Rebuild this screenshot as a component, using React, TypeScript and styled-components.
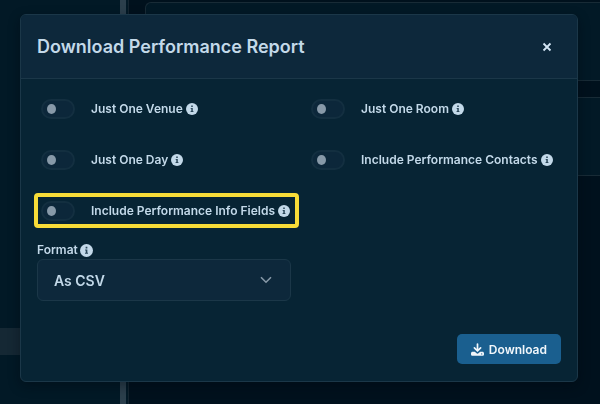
import React, { useId, useState } from "react";
import styled, { createGlobalStyle } from "styled-components";

const color = {
  page: "#00111d",
  sidebar: "#021926",
  panelLine: "#13242f",
  dialog: "#072434",
  header: "#0d283b",
  line: "#1b3748",
  text: "#c3d9e9",
  accent: "#1a5f8f",
  highlight: "#f7dc38",
};

const GlobalStyle = createGlobalStyle`
  *, *::before, *::after { box-sizing: border-box; }
  body {
    margin: 0;
    background: ${color.page};
    color: ${color.text};
    font-family: Inter, "Liberation Sans", sans-serif;
    overflow: hidden;
  }
  button, select, input { font: inherit; color: inherit; }
`;

const Page = styled.div`
  display: flex;
  height: 100vh;
`;

const Sidebar = styled.aside`
  flex: 0 0 120px;
  display: flex;
  flex-direction: column;
  justify-content: flex-end;
  padding-bottom: 49px;
  background: ${color.sidebar};
`;

const SidebarItem = styled.div`
  height: 27px;
  background: #152834;
`;

const ScrollTrack = styled.div`
  flex: 0 0 9px;
  background: ${color.sidebar};
  border-right: 1px solid ${color.panelLine};
`;

const ScrollThumb = styled.div`
  width: 6px;
  height: 100%;
  background: #2b3f4c;
`;

const Content = styled.main`
  flex: 1;
  display: flex;
  flex-direction: column;
  gap: 16px;
  padding: 2px 0 0 16px;
`;

const Card = styled.section`
  height: 79px;
  background: ${color.sidebar};
  border: 1px solid #182b36;
  border-right: 0;
  border-radius: 6px 0 0 6px;
`;

const Overlay = styled.div`
  position: fixed;
  inset: 0;
  padding: 14px 22px 22px 20px;
`;

const Dialog = styled.section`
  display: flex;
  flex-direction: column;
  height: 100%;
  background: ${color.dialog};
  border: 1px solid ${color.line};
  border-radius: 6px;
  box-shadow: 0 4px 12px rgba(0, 8, 16, 0.4);
  overflow: hidden;
`;

const Header = styled.header`
  display: flex;
  align-items: center;
  justify-content: space-between;
  height: 64px;
  padding: 0 16px;
  background: ${color.header};
  border-bottom: 1px solid ${color.line};
`;

const Title = styled.h1`
  margin: 0;
  font-size: 18px;
  line-height: 24px;
  font-weight: 600;
`;

const CloseButton = styled.button`
  display: grid;
  place-items: center;
  width: 28px;
  height: 28px;
  padding: 0;
  border: 0;
  background: none;
  cursor: pointer;
`;

const Body = styled.div`
  flex: 1;
  padding: 12px 16px 0;
`;

const Options = styled.div`
  display: grid;
  grid-template-columns: repeat(2, minmax(0, 1fr));
  gap: 15px 16px;
`;

const Option = styled.div<{ $highlighted?: boolean }>`
  position: relative;
  display: flex;
  align-items: center;
  height: 36px;
  padding-left: 4px;
  white-space: nowrap;

  &::after {
    content: "";
    display: ${(p) => (p.$highlighted ? "block" : "none")};
    position: absolute;
    inset: 0 -8px 1px -3px;
    border: 4px solid ${color.highlight};
    border-radius: 4px;
    pointer-events: none;
  }
`;

const Switch = styled.input`
  appearance: none;
  flex: none;
  display: flex;
  align-items: center;
  width: 34px;
  height: 20px;
  margin: 0 16px 0 0;
  padding: 0 4px;
  background: #0c273a;
  border: 2px solid #132f40;
  border-radius: 10px;
  cursor: pointer;

  &::before {
    content: "";
    width: 9px;
    height: 10px;
    border-radius: 50%;
    background: #8799a8;
  }

  &:checked {
    justify-content: flex-end;
    background: ${color.accent};
  }
`;

const OptionLabel = styled.label`
  margin-right: 3px;
  font-size: 12px;
  line-height: 18px;
  font-weight: 600;
`;

const FieldLabel = styled.div`
  display: flex;
  align-items: center;
  gap: 2px;
  margin-top: 12px;
  font-size: 12px;
  line-height: 18px;
  font-weight: 600;
`;

const InfoSvg = styled.svg`
  display: block;
  flex: none;
`;

const SelectBox = styled.div`
  display: grid;
  align-items: center;
  width: calc(50% - 8px);
`;

const Select = styled.select`
  grid-area: 1 / 1;
  appearance: none;
  width: 100%;
  height: 42px;
  padding: 0 40px 0 16px;
  background: ${color.header};
  border: 1px solid ${color.line};
  border-radius: 6px;
  font-size: 14px;
  font-weight: 600;
`;

const Chevron = styled.svg`
  grid-area: 1 / 1;
  justify-self: end;
  margin-right: 19px;
  pointer-events: none;
`;

const Footer = styled.footer`
  display: flex;
  justify-content: flex-end;
  padding: 0 16px 17px;
`;

const DownloadButton = styled.button`
  display: flex;
  align-items: center;
  justify-content: center;
  gap: 5px;
  height: 30px;
  padding: 0 14px;
  background: ${color.accent};
  border: 0;
  border-radius: 5px;
  color: #f2f7fb;
  font-size: 12px;
  font-weight: 600;
  cursor: pointer;
`;

function InfoIcon({ size = 12 }: { size?: number }) {
  return (
    <InfoSvg width={size} height={size} viewBox="0 0 12 12" aria-hidden="true">
      <circle cx="6" cy="6" r="6" fill="#c3d9e9" />
      <path
        d="M5.2 2.6h1.6v1.5H5.2zM4.7 5h2.1v3h.6v1H4.6V8h.7V6h-.6z"
        fill="#2b4759"
      />
    </InfoSvg>
  );
}

function DownloadIcon() {
  return (
    <svg width="13" height="13" viewBox="0 0 13 13" aria-hidden="true">
      <path
        d="M6.5 1v6.500M3.400 4.900l3.100 3.100 3.100-3.100"
        fill="none"
        stroke="currentColor"
        strokeWidth="1.7"
        strokeLinecap="round"
        strokeLinejoin="round"
      />
      <path
        d="M1.6 8.8h2.2l1.5 1.3a1.8 1.8 0 0 0 2.4 0l1.5-1.3h2.2c.9 0 1.6.7 1.6 1.6v.8c0 .9-.7 1.6-1.6 1.6H1.6C.7 12.8 0 12.1 0 11.2v-.8c0-.9.7-1.6 1.6-1.6z"
        fill="currentColor"
      />
      <circle cx="10.7" cy="10.9" r=".6" fill={color.accent} />
    </svg>
  );
}

function ToggleOption({ label, highlighted }: { label: string; highlighted?: boolean }) {
  const id = useId();
  const [on, setOn] = useState(false);
  return (
    <Option $highlighted={highlighted}>
      <Switch
        id={id}
        type="checkbox"
        role="switch"
        checked={on}
        onChange={(e) => setOn(e.target.checked)}
      />
      <OptionLabel htmlFor={id}>{label}</OptionLabel>
      <InfoIcon />
    </Option>
  );
}

export default function App() {
  return (
    <>
      <GlobalStyle />
      <Page>
        <Sidebar>
          <SidebarItem />
        </Sidebar>
        <ScrollTrack>
          <ScrollThumb />
        </ScrollTrack>
        <Content>
          <Card />
          <Card />
        </Content>
      </Page>
      <Overlay>
        <Dialog role="dialog" aria-modal="true" aria-labelledby="report-title">
          <Header>
            <Title id="report-title">Download Performance Report</Title>
            <CloseButton type="button" aria-label="Close">
              <svg width="10" height="10" viewBox="0 0 10 10" aria-hidden="true">
                <path d="M1.5 1.5l7 7M8.5 1.5l-7 7" stroke="#d3e6f4" strokeWidth="1.8" />
              </svg>
            </CloseButton>
          </Header>
          <Body>
            <Options>
              <ToggleOption label="Just One Venue" />
              <ToggleOption label="Just One Room" />
              <ToggleOption label="Just One Day" />
              <ToggleOption label="Include Performance Contacts" />
              <ToggleOption label="Include Performance Info Fields" highlighted />
            </Options>
            <FieldLabel>
              <label htmlFor="format">Format</label>
              <InfoIcon size={13} />
            </FieldLabel>
            <SelectBox>
              <Select id="format" defaultValue="csv">
                <option value="csv">As CSV</option>
              </Select>
              <Chevron width="12" height="8" viewBox="0 0 12 8" aria-hidden="true">
                <path d="M1 1.2l5 5 5-5" fill="none" stroke="#8799a8" strokeWidth="1.6" />
              </Chevron>
            </SelectBox>
          </Body>
          <Footer>
            <DownloadButton type="button">
              <DownloadIcon />
              Download
            </DownloadButton>
          </Footer>
        </Dialog>
      </Overlay>
    </>
  );
}
